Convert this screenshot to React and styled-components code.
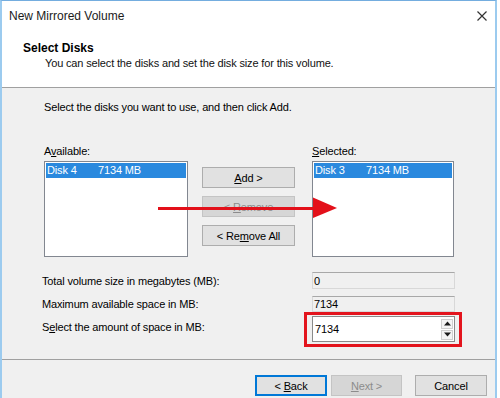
import React from 'react'
import styled, { createGlobalStyle } from 'styled-components'

const GlobalStyle = createGlobalStyle`
  html, body {
    margin: 0;
    padding: 0;
    background: #fff;
  }
  body {
    font-family: "Liberation Sans", Arial, sans-serif;
    font-size: 11px;
    letter-spacing: -0.15px;
    color: #000;
  }
`

const Window = styled.div`
  position: relative;
  width: 493px;
  height: 397px;
  border-top: 1px solid #74addf;
  border-left: 2px solid #9ccbef;
  border-right: 2px solid #9ccbef;
  background: #f0f0f0;
  display: flex;
  flex-direction: column;
  overflow: hidden;
`

const Header = styled.div`
  height: 87px;
  background: #fff;
  border-bottom: 1px solid #a0a0a0;
  box-sizing: border-box;
`

const TitleBar = styled.div`
  height: 30px;
  display: flex;
  align-items: center;
  justify-content: space-between;
  padding: 0 7px;
  font-size: 12px;
  letter-spacing: 0;
  color: #1b1b1b;
`

const CloseGlyph = styled.svg`
  width: 10px;
  height: 10px;
  margin-right: 1px;
`

const Heading = styled.div`
  margin: 10px 0 0 21px;
  line-height: 15px;
  font-size: 12px;
  letter-spacing: 0;
  font-weight: bold;
`

const SubHeading = styled.div`
  margin: 0 0 0 43px;
  line-height: 15px;
  color: #111;
`

const Body = styled.div`
  height: 272px;
  box-sizing: border-box;
  padding: 11px 0 0 40px;
  border-bottom: 1px solid #a0a0a0;
`

const Instruction = styled.div`
  line-height: 16px;
  padding-left: 2px;
`

const Lists = styled.div`
  margin-top: 29px;
  padding-left: 2px;
  display: grid;
  grid-template-columns: 144px 93px 145px;
  column-gap: 14px;
  & > :nth-child(3) {
    margin-left: 3px;
  }
`

const ListColumn = styled.div`
  display: flex;
  flex-direction: column;
  gap: 3px;
`

const ListLabel = styled.div`
  line-height: 14px;
`

const ListBox = styled.div`
  height: 96px;
  box-sizing: border-box;
  background: #fff;
  border: 1px solid #828790;
  padding: 1px;
`

const ListItem = styled.div`
  height: 15px;
  line-height: 15px;
  padding-left: 1px;
  display: flex;
  background: ${({ selected }) => (selected ? '#2a89de' : 'transparent')};
  color: ${({ selected }) => (selected ? '#fff' : '#000')};
`

const ItemName = styled.span`
  width: 51px;
`

const ButtonColumn = styled.div`
  display: flex;
  flex-direction: column;
  gap: 8px;
  padding-top: 23px;
`

const Button = styled.button`
  height: 21px;
  width: ${({ w }) => (w ? `${w}px` : '100%')};
  padding: 0;
  font-family: inherit;
  font-size: 11px;
  letter-spacing: -0.15px;
  background: ${({ disabled }) => (disabled ? '#d6d6d6' : '#e1e1e1')};
  color: ${({ disabled }) => (disabled ? '#8c8c8c' : '#000')};
  border: 1px solid ${({ focused, disabled }) => (focused ? '#0078d7' : disabled ? '#c4c4c4' : '#adadad')};
  box-shadow: ${({ focused }) => (focused ? 'inset 0 0 0 1px #0078d7' : 'none')};
  box-sizing: border-box;
`

const U = styled.span`
  text-decoration: underline;
`

const Fields = styled.div`
  margin-top: 15px;
  display: grid;
  grid-template-columns: 270px 143px;
`

const FieldLabel = styled.div`
  display: flex;
  align-items: center;
  margin-top: ${({ mt }) => mt || 0}px;
`

const ReadOnlyField = styled.div`
  height: ${({ h }) => h}px;
  margin-top: ${({ mt }) => mt || 0}px;
  box-sizing: border-box;
  border: 1px solid #d8d8d8;
  border-top-color: #a8a8a8;
  background: #f0f0f0;
  padding-left: 1px;
  display: flex;
  align-items: center;
  line-height: 14px;
`

const SpinWrap = styled.div`
  position: relative;
  margin-top: 4px;
  height: 26px;
`

const SpinInput = styled.div`
  height: 26px;
  box-sizing: border-box;
  background: #fff;
  border: 1px solid #8a8a8a;
  display: flex;
  align-items: center;
  justify-content: space-between;
  padding: 0 1px 0 2px;
`

const SpinButtons = styled.div`
  display: flex;
  flex-direction: column;
  gap: 1px;
`

const SpinButton = styled.div`
  width: 12px;
  height: 10px;
  box-sizing: border-box;
  border: 1px solid #cfcfcf;
  background: #f4f4f4;
  display: flex;
  align-items: center;
  justify-content: center;
`

const Highlight = styled.div`
  position: absolute;
  top: -4px;
  left: -8px;
  right: -7px;
  bottom: -5px;
  border: 3px solid #e3141d;
  pointer-events: none;
`

const Footer = styled.div`
  flex: 1;
  display: flex;
  justify-content: flex-end;
  align-items: flex-start;
  padding: 15px 8px 0 0;
`

const FooterGap = styled.div`
  width: ${({ w }) => w}px;
`

const ArrowOverlay = styled.svg`
  position: absolute;
  left: 0;
  top: 0;
  width: 100%;
  height: 100%;
  pointer-events: none;
`

const Arrow = ({ up }) => (
  <svg width="7" height="5" viewBox="0 0 7 5">
    <polygon points={up ? '0,4.5 3.5,0.5 7,4.5' : '0,0.5 3.5,4.5 7,0.5'} fill="#1a1a1a" />
  </svg>
)

const App = () => {
  return (
    <>
      <GlobalStyle />
      <Window>
        <Header>
          <TitleBar>
            <span>New Mirrored Volume</span>
            <CloseGlyph viewBox="0 0 10 10">
              <path d="M0.5 0.5 L9.5 9.5 M9.5 0.5 L0.5 9.5" stroke="#333" strokeWidth="1.2" />
            </CloseGlyph>
          </TitleBar>
          <Heading>Select Disks</Heading>
          <SubHeading>You can select the disks and set the disk size for this volume.</SubHeading>
        </Header>

        <Body>
          <Instruction>Select the disks you want to use, and then click Add.</Instruction>
          <Lists>
            <ListColumn>
              <ListLabel>A<U>v</U>ailable:</ListLabel>
              <ListBox>
                <ListItem selected>
                  <ItemName>Disk 4</ItemName>
                  <span>7134 MB</span>
                </ListItem>
              </ListBox>
            </ListColumn>
            <ButtonColumn>
              <Button><U>A</U>dd &gt;</Button>
              <Button disabled>&lt; <U>R</U>emove</Button>
              <Button>&lt; Re<U>m</U>ove All</Button>
            </ButtonColumn>
            <ListColumn>
              <ListLabel><U>S</U>elected:</ListLabel>
              <ListBox>
                <ListItem selected>
                  <ItemName>Disk 3</ItemName>
                  <span>7134 MB</span>
                </ListItem>
              </ListBox>
            </ListColumn>
          </Lists>

          <Fields>
            <FieldLabel>Total volume size in megabytes (MB):</FieldLabel>
            <ReadOnlyField h={17}>0</ReadOnlyField>
            <FieldLabel mt={7}>Maximum available space in MB:</FieldLabel>
            <ReadOnlyField h={16} mt={7}>7134</ReadOnlyField>
            <FieldLabel>S<U>e</U>lect the amount of space in MB:</FieldLabel>
            <SpinWrap>
              <SpinInput>
                <span>7134</span>
                <SpinButtons>
                  <SpinButton><Arrow up /></SpinButton>
                  <SpinButton><Arrow /></SpinButton>
                </SpinButtons>
              </SpinInput>
              <Highlight />
            </SpinWrap>
          </Fields>
        </Body>

        <Footer>
          <Button w={72} focused>&lt; <U>B</U>ack</Button>
          <FooterGap w={4} />
          <Button w={71} disabled><U>N</U>ext &gt;</Button>
          <FooterGap w={13} />
          <Button w={72}>Cancel</Button>
        </Footer>

        <ArrowOverlay viewBox="0 0 493 397">
          <line x1="156" y1="207.5" x2="314" y2="207.5" stroke="#e3101a" strokeWidth="3" />
          <polygon points="311,196.5 335,207 311,217" fill="#e3101a" />
        </ArrowOverlay>
      </Window>
    </>
  )
}

export default App
